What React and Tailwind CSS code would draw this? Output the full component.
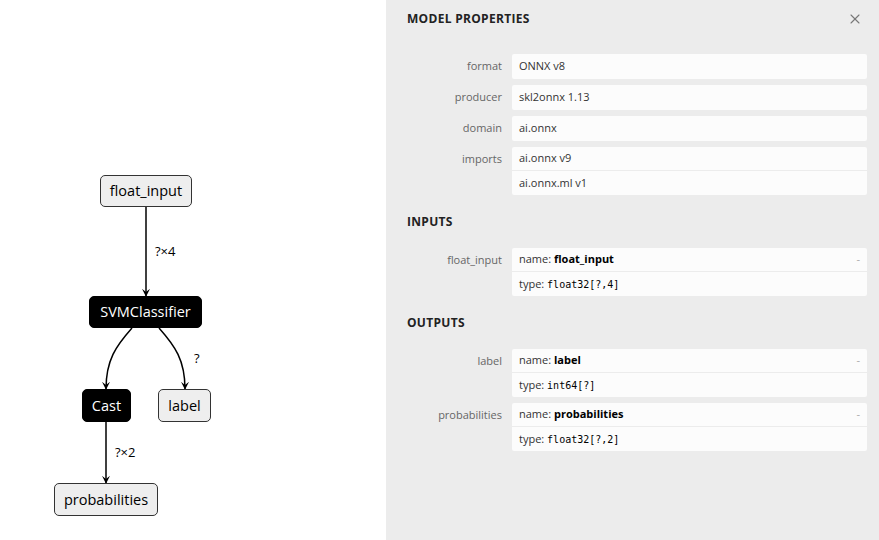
import { X } from "lucide-react";

const sans = { fontFamily: '"Open Sans", "Noto Sans", sans-serif' };

function Node({ label, dark, className }) {
  return (
    <div
      className={`absolute flex items-center justify-center rounded-[5px] border text-[14.5px] ${
        dark
          ? "bg-black border-black text-white"
          : "bg-[#eeeeee] border-[#333333] text-black"
      } ${className}`}
    >
      {label}
    </div>
  );
}

function Graph() {
  return (
    <div className="relative h-full w-[386px] bg-white" style={sans}>
      <svg className="absolute inset-0" width="386" height="540">
        <defs>
          <marker
            id="arrow"
            viewBox="0 0 10 10"
            refX="9"
            refY="5"
            markerWidth="8"
            markerHeight="8"
            orient="auto"
            markerUnits="userSpaceOnUse"
          >
            <path d="M0 0 L10 5 L0 10 L4 5 z" fill="#000" />
          </marker>
        </defs>
        <g stroke="#000" strokeWidth="1.5" fill="none" markerEnd="url(#arrow)">
          <path d="M146 207 L146 296" />
          <path d="M132 328 C116 346, 106 360, 106 389" />
          <path d="M159 328 C175 346, 185 360, 185 389" />
          <path d="M106 422 L106 483" />
        </g>
      </svg>
      <Node label="float_input" className="left-[100px] top-[175px] w-[92px] h-[32px]" />
      <Node label="SVMClassifier" dark className="left-[89px] top-[296px] w-[113px] h-[32px]" />
      <Node label="Cast" dark className="left-[82px] top-[389px] w-[49px] h-[33px]" />
      <Node label="label" className="left-[158px] top-[389px] w-[53px] h-[33px]" />
      <Node label="probabilities" className="left-[54px] top-[483px] w-[104px] h-[33px]" />
      <span className="absolute left-[155px] top-[242px] text-[13px] text-black">?×4</span>
      <span className="absolute left-[194px] top-[349px] text-[13px] text-black">?</span>
      <span className="absolute left-[115px] top-[443px] text-[13px] text-black">?×2</span>
    </div>
  );
}

function Row({ name, children }) {
  return (
    <div className="flex gap-[10px]">
      <div className="w-[95px] shrink-0 h-[25px] flex items-center justify-end text-[#666666]">
        {name}
      </div>
      <div className="flex-1 min-h-[25px] rounded-[2px] bg-[#fcfcfc] flex flex-col justify-center divide-y divide-[#ececec]">
        {children}
      </div>
    </div>
  );
}

function Line({ children, dash }) {
  return (
    <div className="h-[24px] px-[7px] flex items-center justify-between text-[#333333]">
      <span>{children}</span>
      {dash && <span className="text-[#aaaaaa]">-</span>}
    </div>
  );
}

const mono = { fontFamily: '"DejaVu Sans Mono", "Liberation Mono", monospace' };

function Type({ t }) {
  return (
    <>
      type: <span className="text-[10px] text-black" style={mono}>{t}</span>
    </>
  );
}

function Section({ title }) {
  return (
    <div className="h-[53px] flex items-center font-bold text-[12px] text-[#222222] tracking-[0.3px]">
      {title}
    </div>
  );
}

function Panel() {
  return (
    <div className="w-[493px] h-full bg-[#ececec] pl-[21px] pr-[12px] text-[11px]" style={sans}>
      <div className="h-[38px] flex items-center justify-between">
        <span className="font-bold text-[12px] text-[#222222] tracking-[0.3px]">MODEL PROPERTIES</span>
        <X className="w-[16px] h-[16px] mr-[4px] text-[#777777]" strokeWidth={1.6} />
      </div>
      <div className="mt-[16px] flex flex-col gap-[6px]">
        <Row name="format"><Line>ONNX v8</Line></Row>
        <Row name="producer"><Line>skl2onnx 1.13</Line></Row>
        <Row name="domain"><Line>ai.onnx</Line></Row>
        <Row name="imports">
          <Line>ai.onnx v9</Line>
          <Line>ai.onnx.ml v1</Line>
        </Row>
      </div>
      <Section title="INPUTS" />
      <Row name="float_input">
        <Line dash>name: <b className="text-black">float_input</b></Line>
        <Line><Type t="float32[?,4]" /></Line>
      </Row>
      <Section title="OUTPUTS" />
      <div className="flex flex-col gap-[6px]">
        <Row name="label">
          <Line dash>name: <b className="text-black">label</b></Line>
          <Line><Type t="int64[?]" /></Line>
        </Row>
        <Row name="probabilities">
          <Line dash>name: <b className="text-black">probabilities</b></Line>
          <Line><Type t="float32[?,2]" /></Line>
        </Row>
      </div>
    </div>
  );
}

export default function App() {
  return (
    <div className="flex w-[879px] h-[540px] overflow-hidden">
      <Graph />
      <Panel />
    </div>
  );
}
